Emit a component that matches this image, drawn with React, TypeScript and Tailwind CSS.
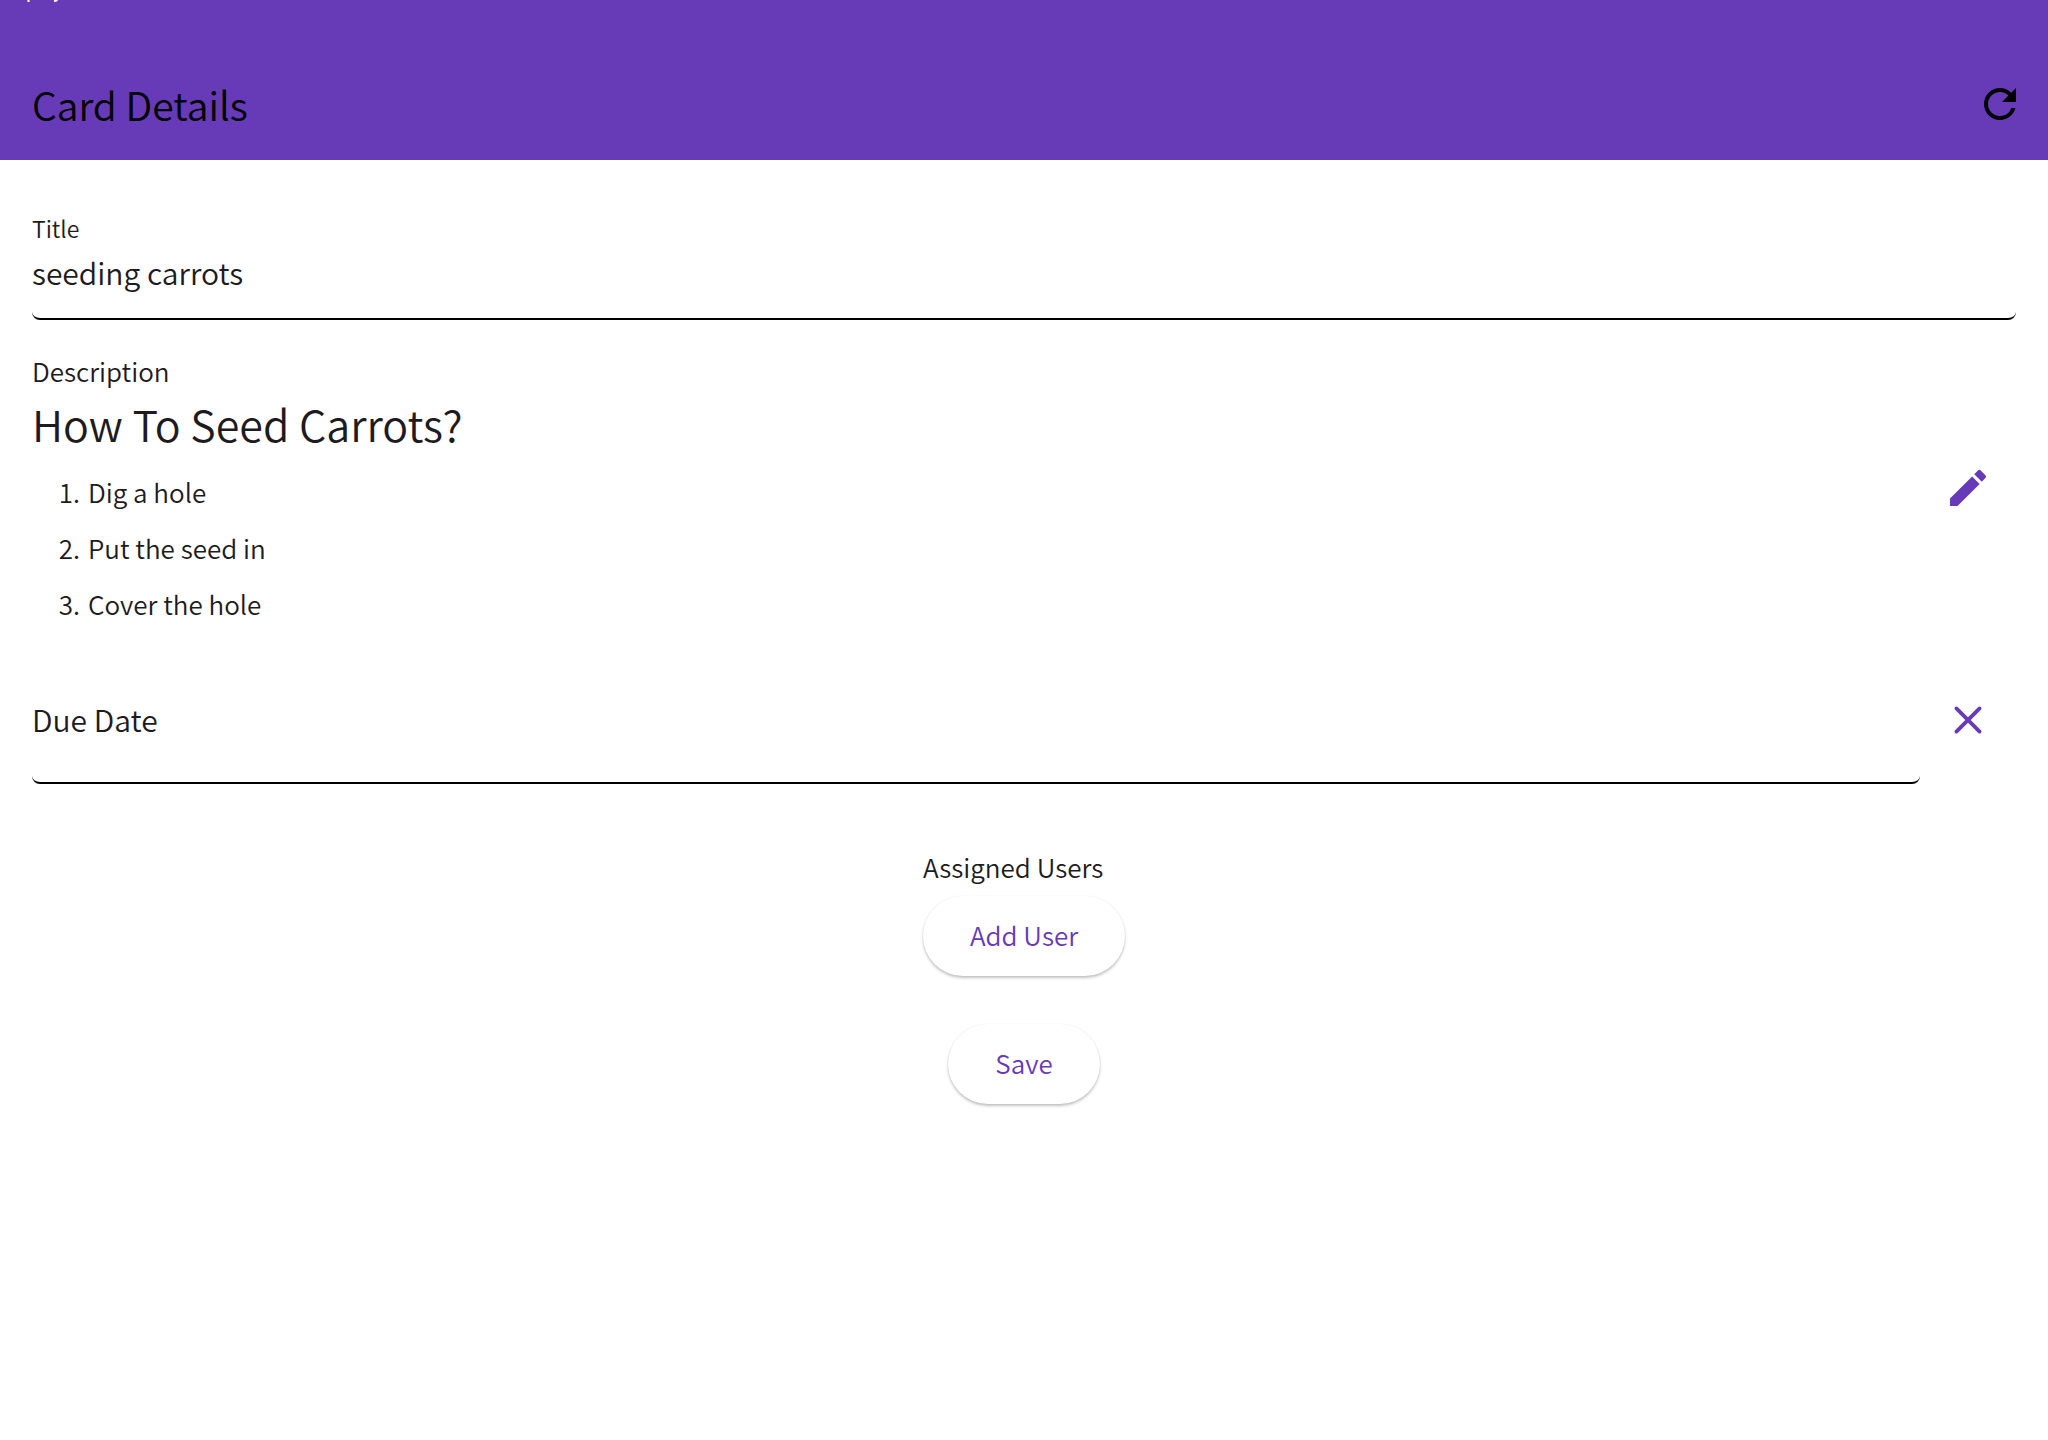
import { MdEdit, MdOutlineRefresh } from "react-icons/md";

const steps = ["Dig a hole", "Put the seed in", "Cover the hole"];

function PillButton({ label }: { label: string }) {
  return (
    <button
      type="button"
      className="h-20 rounded-full bg-white px-[47px] pb-0.5 text-[26px] leading-10 text-[#673ab7] shadow-[0_2px_3px_rgba(0,0,0,0.24),0_0_2px_rgba(0,0,0,0.06)]"
    >
      {label}
    </button>
  );
}

export default function App() {
  return (
    <div className="min-h-screen bg-white font-['Noto_Sans_CJK_SC',sans-serif] font-[350] text-[#1d1b20]">
      <header className="relative flex h-40 items-end justify-between bg-[#673ab7] px-8 pb-6 text-black">
        <svg className="absolute left-6 top-0" width="40" height="2" aria-hidden="true" fill="#fff">
          <path d="M3.5 0h2v2h-2zM30 0h4l-1 1.5h-1L31 2h-1z" />
        </svg>
        <h1 className="text-[39px] leading-16">Card Details</h1>
        <button type="button" aria-label="Refresh" className="-mr-2 flex h-16 items-center">
          <MdOutlineRefresh size={48} />
        </button>
      </header>

      <main className="px-8 pt-12">
        <div className="flex h-28 flex-col rounded-b-lg border-b-2 border-black pt-1">
          <label htmlFor="title" className="text-[23px] leading-8">
            Title
          </label>
          <input
            id="title"
            defaultValue="seeding carrots"
            className="h-14 w-full bg-transparent p-0 text-[30px] leading-10 outline-none"
          />
        </div>

        <section className="flex items-center pt-8">
          <div className="grow">
            <p className="text-[26px] leading-[38px]">Description</p>
            <h2 className="text-[43px] leading-[66px]">How To Seed Carrots?</h2>
            <ol className="flex flex-col gap-4 pt-4">
              {steps.map((step, i) => (
                <li key={step} className="flex gap-2 pl-6 text-[26px] leading-10">
                  <span className="w-6 text-right">{i + 1}.</span>
                  <span>{step}</span>
                </li>
              ))}
            </ol>
          </div>
          <button type="button" aria-label="Edit description" className="flex size-24 items-center justify-center text-[#673ab7]">
            <MdEdit size={48} />
          </button>
        </section>

        <div className="flex pt-12">
          <div className="flex h-28 grow items-center rounded-b-lg border-b-2 border-black pb-4">
            <label htmlFor="due" className="shrink-0 pr-4 text-[30px] leading-10">
              Due Date
            </label>
            <input id="due" className="h-full min-w-0 grow bg-transparent outline-none" />
          </div>
          <button type="button" aria-label="Clear due date" className="flex size-24 items-center justify-center text-[#673ab7]">
            <svg width="48" height="48" viewBox="0 0 24 24" stroke="currentColor" strokeWidth="1.9" strokeLinecap="round">
              <path d="M6.2 6.2l11.6 11.6M17.8 6.2L6.2 17.8" />
            </svg>
          </button>
        </div>

        <section className="flex flex-col items-center pt-16">
          <div className="flex flex-col items-start">
            <h3 className="pb-2.5 text-[26px] leading-[38px]">Assigned Users</h3>
            <PillButton label="Add User" />
          </div>
          <div className="pt-12">
            <PillButton label="Save" />
          </div>
        </section>
      </main>
    </div>
  );
}
